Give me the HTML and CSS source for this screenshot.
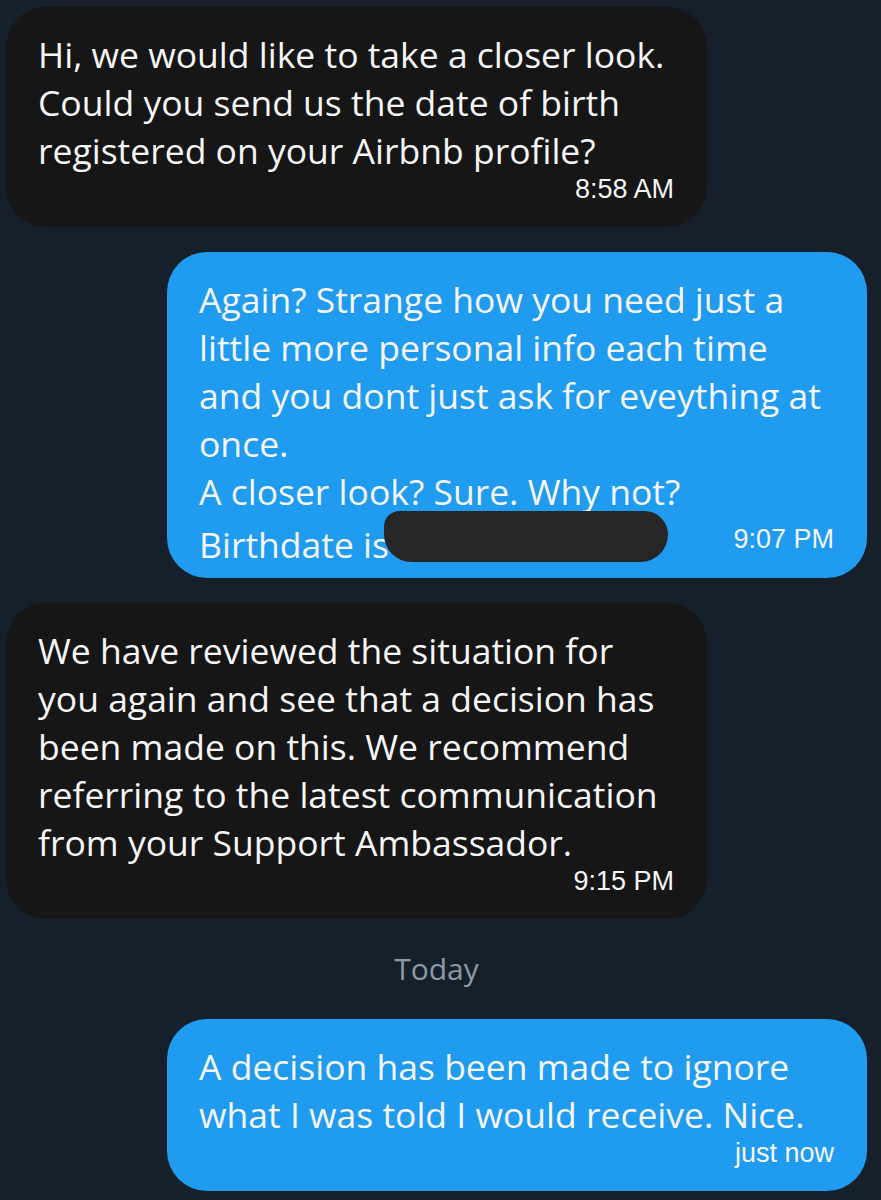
FILE: index.html
```html
<!DOCTYPE html>
<html lang="en">
<head>
  <meta charset="UTF-8">
  <meta name="viewport" content="width=device-width, initial-scale=1.0">
  <title>Messages</title>
  <link rel="stylesheet" href="styles.css">
</head>
<body>
  <div class="thread">
    <div class="bubble in">
      <p class="text">Hi, we would like to take a closer look.<br>Could you send us the date of birth<br>registered on your Airbnb profile?</p>
      <div class="time">8:58 AM</div>
    </div>

    <div class="bubble out inline-time">
      <p class="text">Again? Strange how you need just a<br>little more personal info each time<br>and you dont just ask for eveything at<br>once.<br>A closer look? Sure. Why not?</p>
      <div class="last-line">
        <span class="text">Birthdate is<span class="redacted"></span></span>
        <span class="time">9:07 PM</span>
      </div>
    </div>

    <div class="bubble in">
      <p class="text">We have reviewed the situation for<br>you again and see that a decision has<br>been made on this. We recommend<br>referring to the latest communication<br>from your Support Ambassador.</p>
      <div class="time">9:15 PM</div>
    </div>

    <div class="day">Today</div>

    <div class="bubble out">
      <p class="text">A decision has been made to ignore<br>what I was told I would receive. Nice.</p>
      <div class="time">just now</div>
    </div>
  </div>
</body>
</html>
```

FILE: styles.css
```css
body {
  margin: 0;
  background-color: #16202a;
  font-family: "Open Sans", "Noto Sans", sans-serif;
  color: #f5f5f5;
}

.thread {
  display: flex;
  flex-direction: column;
  gap: 25px;
  padding: 7px 14px 20px 6px;
}

.bubble {
  box-sizing: border-box;
  border-radius: 40px;
  padding: 23px 33px 23px 32px;
}

.in {
  align-self: flex-start;
  width: 701px;
  background-color: #161616;
}

.out {
  align-self: flex-end;
  width: 700px;
  background-color: #1f9bef;
}

.inline-time {
  padding-bottom: 15px;
}

.text {
  margin: 0;
  font-size: 35.5px;
  line-height: 48px;
  white-space: nowrap;
}

.time {
  font-family: "Liberation Sans", Arial, sans-serif;
  font-size: 27px;
  line-height: 30px;
  text-align: right;
}

.last-line {
  display: flex;
  justify-content: space-between;
  align-items: center;
  height: 48px;
}

.redacted {
  display: inline-block;
  width: 284px;
  height: 51px;
  margin-left: -5px;
  vertical-align: -4px;
  background-color: #262626;
  border-radius: 16px 24px 28px 28px;
}

.day {
  text-align: center;
  font-size: 30px;
  line-height: 50px;
  color: #8b98a5;
}
```
